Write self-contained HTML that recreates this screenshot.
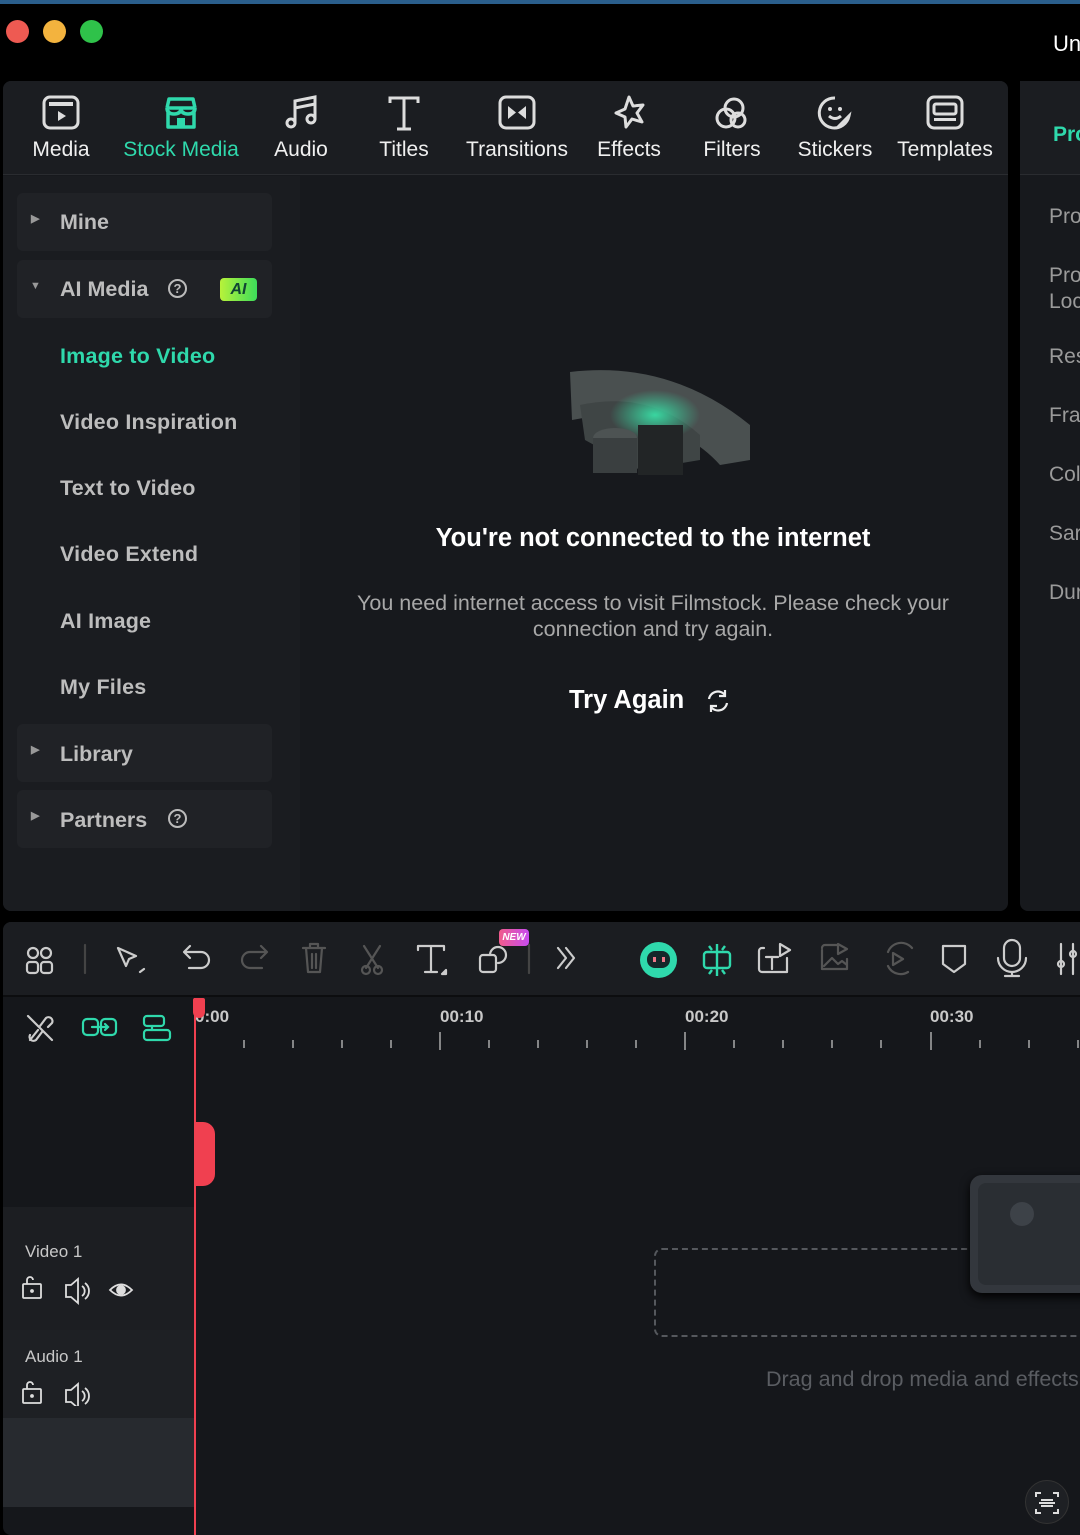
<!DOCTYPE html>
<html><head><meta charset="utf-8"><style>
*{margin:0;padding:0;box-sizing:border-box}
body{width:1080px;height:1535px;background:#000;position:relative;overflow:hidden;font-family:"Liberation Sans",sans-serif;color:#e6e6e6}
.a{position:absolute}
.tab{position:absolute;top:94px;text-align:center;font-size:21px;color:#f0f0f0;white-space:nowrap}
.tab svg{display:block;margin:0 auto 6px}
.item{position:absolute;left:17px;width:255px;height:58px;border-radius:6px;background:#202226;font-size:21.5px;font-weight:bold;color:#bdbdbd}
.sub{position:absolute;left:60px;font-size:21.5px;font-weight:bold;color:#bdbdbd;letter-spacing:0.2px}
.rp{position:absolute;left:1049px;font-size:21px;color:#9a9a9a;line-height:26px}
</style></head><body>
<div class="a" style="left:0;top:0;width:1080px;height:4px;background:#2a5e8c"></div>
<div class="a" style="left:6px;top:20px;width:23px;height:23px;border-radius:50%;background:#ee5a52"></div>
<div class="a" style="left:43px;top:20px;width:23px;height:23px;border-radius:50%;background:#f3b33e"></div>
<div class="a" style="left:80px;top:20px;width:23px;height:23px;border-radius:50%;background:#2fc24a"></div>
<div class="a" style="left:1053px;top:31px;font-size:22px;color:#fff">Un</div>

<div class="a" style="left:3px;top:81px;width:1005px;height:830px;border-radius:8px;background:#17191d;overflow:hidden">
 <div class="a" style="left:0;top:0;width:1005px;height:94px;background:#1b1d21;border-bottom:1px solid #2a2c30"></div>
 <div class="a" style="left:0;top:95px;width:297px;height:735px;background:#1a1c20"></div>
</div>
<div class="tab" style="left:28px;width:66px"><svg width="40" height="38" viewBox="0 0 40 38"><rect x="3" y="3" width="34" height="31" rx="6" fill="none" stroke="#ddd" stroke-width="3"/><rect x="8" y="8" width="24" height="4" fill="#ddd"/><path d="M17 17v10l8-5z" fill="#ddd"/></svg>Media</div>
<div class="tab" style="left:118px;width:126px;color:#2fd9ac"><svg width="40" height="38" viewBox="0 0 40 38"><path d="M6 14 L8 5 H32 L34 14 M6 14 Q6 20 13 20 Q20 20 20 14 Q20 20 27 20 Q34 20 34 14 M7 16 V33 H33 V16 M6 14 H34" fill="none" stroke="#2fd9ac" stroke-width="3.5" stroke-linejoin="round"/><rect x="16" y="24" width="8" height="9" fill="#2fd9ac"/></svg>Stock Media</div>
<div class="tab" style="left:270px;width:62px"><svg width="40" height="38" viewBox="0 0 40 38"><path d="M14 29V7l20-4v22 M14 14l20-4" fill="none" stroke="#ddd" stroke-width="3"/><circle cx="10" cy="29" r="4" fill="none" stroke="#ddd" stroke-width="3"/><circle cx="30" cy="25" r="4" fill="none" stroke="#ddd" stroke-width="3"/></svg>Audio</div>
<div class="tab" style="left:374px;width:60px"><svg width="40" height="38" viewBox="0 0 40 38"><path d="M6 9V4h28v5 M20 4v31 M13 35h14" fill="none" stroke="#ddd" stroke-width="3"/></svg>Titles</div>
<div class="tab" style="left:462px;width:110px"><svg width="40" height="38" viewBox="0 0 40 38"><rect x="3" y="3" width="34" height="31" rx="6" fill="none" stroke="#ddd" stroke-width="3"/><path d="M11 12v13l8-6.5z M29 12v13l-8-6.5z" fill="#ddd"/></svg>Transitions</div>
<div class="tab" style="left:594px;width:70px"><svg width="40" height="38" viewBox="0 0 40 38"><path d="M20 3l4 9 10-1-6 8 5 9-10-3-6 8-1-10-9-4 9-4z" fill="none" stroke="#ddd" stroke-width="3" stroke-linejoin="round"/></svg>Effects</div>
<div class="tab" style="left:700px;width:64px"><svg width="40" height="38" viewBox="0 0 40 38"><circle cx="22" cy="14" r="9" fill="none" stroke="#ddd" stroke-width="3"/><circle cx="14" cy="24" r="9" fill="none" stroke="#ddd" stroke-width="3"/><circle cx="26" cy="26" r="7" fill="none" stroke="#ddd" stroke-width="3"/></svg>Filters</div>
<div class="tab" style="left:795px;width:80px"><svg width="40" height="38" viewBox="0 0 40 38"><path d="M20 4a15 15 0 1 0 14 18l-12 12" fill="none" stroke="#ddd" stroke-width="3"/><path d="M14 22q6 5 12 0" fill="none" stroke="#ddd" stroke-width="3"/><circle cx="15" cy="15" r="2" fill="#ddd"/><circle cx="25" cy="15" r="2" fill="#ddd"/></svg>Stickers</div>
<div class="tab" style="left:894px;width:102px"><svg width="40" height="38" viewBox="0 0 40 38"><rect x="3" y="3" width="34" height="31" rx="6" fill="none" stroke="#ddd" stroke-width="3"/><rect x="9" y="10" width="22" height="10" rx="2" fill="none" stroke="#ddd" stroke-width="3"/><rect x="9" y="24" width="22" height="3" fill="#ddd"/></svg>Templates</div>

<div class="item" style="top:193px"><span class="a" style="left:14px;top:19px;font-size:11px;color:#999">▶</span><span class="a" style="left:43px;top:17px">Mine</span></div>
<div class="item" style="top:260px"><span class="a" style="left:13px;top:20px;font-size:11px;color:#999">▼</span><span class="a" style="left:43px;top:17px">AI Media</span><span class="a" style="left:151px;top:19px;width:19px;height:19px;border:2px solid #bbb;border-radius:50%;font-size:13px;text-align:center;line-height:15px">?</span><span class="a" style="left:203px;top:18px;width:37px;height:23px;border-radius:4px;background:linear-gradient(90deg,#b8f23a,#3ddc5a);color:#143;font-style:italic;font-size:16px;text-align:center;line-height:23px">AI</span></div>
<div class="sub" style="top:344px;color:#2fd9ac">Image to Video</div>
<div class="sub" style="top:410px">Video Inspiration</div>
<div class="sub" style="top:476px">Text to Video</div>
<div class="sub" style="top:542px">Video Extend</div>
<div class="sub" style="top:609px">AI Image</div>
<div class="sub" style="top:675px">My Files</div>
<div class="item" style="top:724px"><span class="a" style="left:14px;top:19px;font-size:11px;color:#999">▶</span><span class="a" style="left:43px;top:18px">Library</span></div>
<div class="item" style="top:790px"><span class="a" style="left:14px;top:19px;font-size:11px;color:#999">▶</span><span class="a" style="left:43px;top:18px">Partners</span><span class="a" style="left:151px;top:19px;width:19px;height:19px;border:2px solid #bbb;border-radius:50%;font-size:13px;text-align:center;line-height:15px">?</span></div>

<svg class="a" style="left:560px;top:360px" width="200" height="120" viewBox="0 0 200 120">
<defs><radialGradient id="g" cx="0.5" cy="0.5" r="0.5"><stop offset="0" stop-color="#39d6a0"/><stop offset="1" stop-color="#39d6a0" stop-opacity="0"/></radialGradient></defs>
<path d="M10 12 Q110 0 190 65 L190 100 L160 105 Q120 60 40 55 L12 60Z" fill="#4a5050"/>
<path d="M20 45 Q90 30 140 75 L140 100 L80 110 L25 80Z" fill="#3f4545"/>
<ellipse cx="95" cy="55" rx="45" ry="25" fill="url(#g)"/>
<rect x="78" y="65" width="45" height="50" fill="#222526"/>
<ellipse cx="55" cy="78" rx="22" ry="10" fill="#4d5353"/><rect x="33" y="78" width="44" height="35" fill="#3a3f40"/>
</svg>
<div class="a" style="left:0;width:1306px;top:524px;text-align:center;font-size:25.5px;font-weight:bold;color:#fff">You're not connected to the internet</div>
<div class="a" style="left:0;width:1306px;top:590px;text-align:center;font-size:21.5px;color:#a8a8a8;line-height:26px">You need internet access to visit Filmstock. Please check your<br>connection and try again.</div>
<div class="a" style="left:569px;top:686px;font-size:25.5px;font-weight:bold;color:#fff">Try Again</div>
<svg class="a" style="left:705px;top:688px" width="26" height="26" viewBox="0 0 26 26"><path d="M4 11a9 9 0 0 1 16-4 M22 15a9 9 0 0 1-16 4" fill="none" stroke="#eee" stroke-width="2.2"/><path d="M20 2v6h-6 M6 24v-6h6" fill="none" stroke="#eee" stroke-width="2.2"/></svg>

<div class="a" style="left:1020px;top:81px;width:70px;height:830px;border-radius:8px;background:#17191d">
 <div class="a" style="left:0;top:0;width:70px;height:94px;background:#1b1d21;border-bottom:1px solid #2a2c30"></div>
</div>
<div class="a" style="left:1053px;top:123px;font-size:21px;font-weight:bold;color:#2fd9ac">Pro</div>
<div class="rp" style="top:204px">Pro</div>
<div class="rp" style="top:263px">Pro<br>Loc</div>
<div class="rp" style="top:344px">Res</div>
<div class="rp" style="top:403px">Fra</div>
<div class="rp" style="top:462px">Col</div>
<div class="rp" style="top:521px">Sar</div>
<div class="rp" style="top:580px">Dur</div>

<div class="a" style="left:3px;top:922px;width:1090px;height:613px;border-radius:8px 0 0 8px;background:#15171b;overflow:hidden">
 <div class="a" style="left:0;top:0;width:1090px;height:75px;background:#1b1d21;border-bottom:2px solid #0c0d0f"></div>
 <div class="a" style="left:0;top:285px;width:192px;height:123px;background:#1c1e22"></div>
 <div class="a" style="left:0;top:408px;width:192px;height:88px;background:#1e2024"></div>
 <div class="a" style="left:0;top:496px;width:192px;height:89px;background:#272a2f"></div>
</div>
<svg class="a" style="left:0;top:930px" width="1080" height="60" viewBox="0 0 1080 60" fill="none" stroke="#ccc" stroke-width="2.2" stroke-linecap="round" stroke-linejoin="round">
<circle cx="33" cy="23" r="5"/><circle cx="46" cy="23" r="5"/><rect x="27" y="32" width="11" height="11" rx="3"/><rect x="41" y="32" width="11" height="11" rx="3"/>
<path d="M85 15v28" stroke="#444"/>
<path d="M118 18l18 8-7 3-3 7z M140 42l4-3" />
<path d="M185 22h16a8 8 0 0 1 0 16h-12 M190 16l-6 6 6 6"/>
<path d="M266 22h-16a8 8 0 0 0 0 16h12 M261 16l6 6-6 6" stroke="#555"/>
<path d="M303 18h22 M310 18v-4h8v4 M306 18l2 24h12l2-24 M312 24v14 M316 24v14" stroke="#555"/>
<path d="M364 16l14 22 M380 16l-14 22" stroke="#555"/><circle cx="366" cy="40" r="4" stroke="#555"/><circle cx="378" cy="40" r="4" stroke="#555"/>
<path d="M418 20v-4h26v4 M431 16v26 M425 42h12"/><path d="M446 40l-4 4h4z" fill="#ccc"/>
<rect x="480" y="25" width="16" height="17" rx="3"/><path d="M490 25a8 8 0 1 1 8 8"/>
<path d="M529 15v28" stroke="#444"/>
<path d="M558 18l8 10-8 10 M566 18l8 10-8 10"/>
<path d="M1004 18v10a8 8 0 0 0 16 0v-10a8 8 0 0 0-16 0 M998 28a14 14 0 0 0 28 0 M1012 42v4 M1005 46h14"/>
<path d="M943 16h22v18l-11 8-11-8z"/>
<path d="M1061 14v30 M1073 14v30"/><circle cx="1061" cy="34" r="3"/><circle cx="1073" cy="24" r="3"/>
<path d="M764 18h-2a3 3 0 0 0-3 3v18a3 3 0 0 0 3 3h25v-14 M766 27h12 M772 27v12 M780 14l10 6-10 6z"/>
<path d="M822 18a3 3 0 0 1 3-3h14 M822 20v19h25v-10 M824 36l8-8 6 6 4-3 5 4 M838 14l9 5-9 5z" stroke="#555"/>
<path d="M888 22a14 14 0 0 1 24-4 M908 42a14 14 0 0 1-20-6 M893 23v12l10-6z" stroke="#555"/>
</svg>
<div class="a" style="left:499px;top:929px;width:30px;height:17px;border-radius:4px;background:linear-gradient(90deg,#f05b8c,#c84cf0);font-size:10px;font-style:italic;font-weight:bold;color:#fff;text-align:center;line-height:17px">NEW</div>
<div class="a" style="left:640px;top:942px;width:37px;height:36px;border-radius:50%;background:#2fd9ac"><div class="a" style="left:7px;top:9px;width:23px;height:17px;border-radius:8px;background:#14282a"></div><div class="a" style="left:13px;top:15px;width:3px;height:5px;background:#e78;"></div><div class="a" style="left:22px;top:15px;width:3px;height:5px;background:#e78;"></div></div>
<svg class="a" style="left:700px;top:940px" width="34" height="40" viewBox="0 0 34 40" fill="none" stroke="#2fd9ac" stroke-width="2.4"><rect x="4" y="12" width="26" height="16" rx="3"/><path d="M17 4v32 M9 6l3 4 M25 6l-3 4 M9 34l3-4 M25 34l-3-4"/></svg>
<svg class="a" style="left:20px;top:1010px" width="160" height="36" viewBox="0 0 160 36" fill="none" stroke-width="2.2" stroke-linecap="round">
<path d="M10 30l8-10 M20 16l6-8a4 4 0 0 1 6 5l-4 4 M22 22l-6 8a4 4 0 0 1-6-5 M8 6l24 24" stroke="#ccc"/>
<rect x="63" y="9" width="15" height="16" rx="4" stroke="#2fd9ac"/><rect x="81" y="9" width="15" height="16" rx="4" stroke="#2fd9ac"/><path d="M72 17h16 M85 14l3 3-3 3" stroke="#2fd9ac"/>
<rect x="124" y="6" width="20" height="10" rx="3" stroke="#2fd9ac"/><rect x="124" y="20" width="26" height="10" rx="3" stroke="#2fd9ac"/><path d="M132 16v4" stroke="#2fd9ac"/>
</svg>
<div class="a" style="left:195px;top:1007px;font-size:17px;font-weight:bold;color:#c8c8c8">0:00</div>
<div class="a" style="left:440px;top:1007px;font-size:17px;font-weight:bold;color:#c8c8c8">00:10</div>
<div class="a" style="left:685px;top:1007px;font-size:17px;font-weight:bold;color:#c8c8c8">00:20</div>
<div class="a" style="left:930px;top:1007px;font-size:17px;font-weight:bold;color:#c8c8c8">00:30</div>
<svg class="a" style="left:195px;top:1030px" width="885" height="22">
<g stroke="#aaa" stroke-width="1.5">
<path d="M49 10v8M98 10v8M147 10v8M196 10v8M245 2v18M294 10v8M343 10v8M392 10v8M441 10v8M490 2v18M539 10v8M588 10v8M637 10v8M686 10v8M736 2v18M785 10v8M834 10v8M883 10v8"/></g></svg>
<div class="a" style="left:194px;top:998px;width:2px;height:537px;background:#f04050"></div>
<div class="a" style="left:193px;top:998px;width:12px;height:20px;background:#f04050;border-radius:2px 2px 6px 6px"></div>
<div class="a" style="left:194px;top:1122px;width:21px;height:64px;background:#f04050;border-radius:0 12px 12px 0"></div>
<div class="a" style="left:25px;top:1242px;font-size:17px;color:#c8c8c8">Video 1</div>
<div class="a" style="left:25px;top:1347px;font-size:17px;color:#c8c8c8">Audio 1</div>
<svg class="a" style="left:20px;top:1276px" width="120" height="130" viewBox="0 0 120 130" fill="none" stroke="#ddd" stroke-width="1.8">
<rect x="3" y="8" width="18" height="14" rx="1"/><path d="M7 8v-4a3 3 0 0 1 6 0"/><circle cx="12" cy="15" r="1" fill="#ddd"/>
<path d="M46 9h5l7-6v24l-7-6h-5z M62 10a6 6 0 0 1 0 10 M65 7a10 10 0 0 1 0 16"/>
<path d="M90 14q11-11 22 0q-11 11-22 0z"/><circle cx="101" cy="14" r="4" fill="#ddd"/>
<g transform="translate(0,105)"><rect x="3" y="8" width="18" height="14" rx="1"/><path d="M7 8v-4a3 3 0 0 1 6 0"/><circle cx="12" cy="15" r="1" fill="#ddd"/>
<path d="M46 9h5l7-6v24l-7-6h-5z M62 10a6 6 0 0 1 0 10 M65 7a10 10 0 0 1 0 16"/></g>
</svg>
<div class="a" style="left:654px;top:1248px;width:450px;height:89px;border:2px dashed #55585d;border-radius:8px"></div>
<div class="a" style="left:970px;top:1175px;width:140px;height:118px;border-radius:12px;background:#33373d;box-shadow:0 4px 10px #000"><div class="a" style="left:8px;top:8px;width:130px;height:102px;border-radius:8px;background:#2a2e33"></div><div class="a" style="left:40px;top:27px;width:24px;height:24px;border-radius:50%;background:#3d4248"></div></div>
<div class="a" style="left:766px;top:1367px;font-size:21.5px;color:#5a5d62;white-space:nowrap">Drag and drop media and effects</div>
<div class="a" style="left:1025px;top:1480px;width:44px;height:44px;border-radius:50%;background:#1e2024;border:1px solid #333"></div>
<svg class="a" style="left:1033px;top:1489px" width="28" height="28" viewBox="0 0 28 28" fill="none" stroke="#ddd" stroke-width="2"><path d="M3 8V4h5 M20 4h5v4 M3 20v4h5 M20 24h5v-4 M8 11h12 M6 14h16 M8 17h12"/></svg>
</body></html>
